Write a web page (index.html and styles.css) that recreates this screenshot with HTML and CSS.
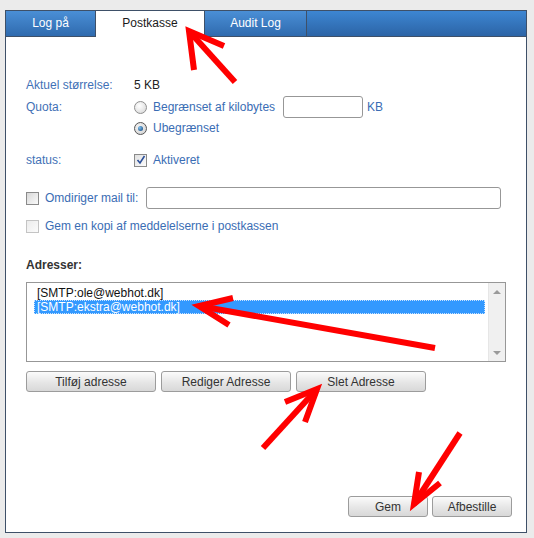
FILE: index.html
```html
<!DOCTYPE html>
<html>
<head>
<meta charset="utf-8">
<link rel="stylesheet" href="styles.css">
</head>
<body>
<div class="panel">
  <div class="tabs">
    <div class="tab tab-first">Log på</div>
    <div class="tab tab-active">Postkasse</div>
    <div class="tab tab-last">Audit Log</div>
    <div class="tab-fill"></div>
  </div>
  <div class="content">
    <div class="row r1">
      <span class="label">Aktuel størrelse:</span>
      <span class="value">5 KB</span>
    </div>
    <div class="row r2">
      <span class="label">Quota:</span>
      <span class="opt"><span class="radio"></span><span class="blue">Begrænset af kilobytes</span></span>
      <span class="textbox kb"></span>
      <span class="blue unit">KB</span>
    </div>
    <div class="row r3">
      <span class="label"></span>
      <span class="opt"><span class="radio on"><span class="dot"></span></span><span class="blue">Ubegrænset</span></span>
    </div>
    <div class="row r4">
      <span class="label">status:</span>
      <span class="opt"><span class="check on"><svg width="10" height="10" viewBox="0 0 10 10"><path d="M1.5 5 L4 8 L8.5 1" fill="none" stroke="#2b4f9a" stroke-width="1.6"/></svg></span><span class="blue">Aktiveret</span></span>
    </div>
    <div class="row r5">
      <span class="opt"><span class="check"></span><span class="blue">Omdiriger mail til:</span></span>
      <span class="textbox mail"></span>
    </div>
    <div class="row r6">
      <span class="opt"><span class="check off"></span><span class="blue">Gem en kopi af meddelelserne i postkassen</span></span>
    </div>
    <div class="heading">Adresser:</div>
    <div class="listbox">
      <div class="items">
        <div class="item">[SMTP:ole@webhot.dk]</div>
        <div class="item sel">[SMTP:ekstra@webhot.dk]</div>
      </div>
      <div class="scroll">
        <span class="arr up"></span>
        <span class="arr down"></span>
      </div>
    </div>
    <div class="btnrow">
      <button class="btn">Tilføj adresse</button>
      <button class="btn">Rediger Adresse</button>
      <button class="btn">Slet Adresse</button>
    </div>
    <div class="footer">
      <button class="btn small">Gem</button>
      <button class="btn small">Afbestille</button>
    </div>
  </div>
</div>
<svg class="arrows" width="534" height="538" viewBox="0 0 534 538">
  <g fill="none" stroke="#ff0000" stroke-width="6" stroke-linecap="butt" stroke-linejoin="miter">
    <path d="M235 82 L189 31"/>
    <path d="M224 46 L189 31 L194 70"/>
    <path d="M435 348 L199 306"/>
    <path d="M233 298 L199 306 L229 325"/>
    <path d="M263 448 L317 389"/>
    <path d="M285 402 L317 389 L305 422"/>
    <path d="M460 433 L414 504"/>
    <path d="M419 472 L414 504 L440 483"/>
  </g>
</svg>
</body>
</html>
```
FILE: styles.css
```css
html, body {
  margin: 0;
  padding: 0;
}
body {
  background: #ebebeb;
  width: 534px;
  height: 538px;
  position: relative;
  font-family: "Liberation Sans", Arial, sans-serif;
  font-size: 12px;
  overflow: hidden;
}
.panel {
  position: absolute;
  left: 5px;
  top: 10px;
  width: 520px;
  height: 521px;
  border: 1px solid #3e5068;
  background: #fff;
}
.tabs {
  display: flex;
  height: 26px;
}
.tab {
  height: 25px;
  line-height: 25px;
  text-align: center;
  color: #fff;
  background: linear-gradient(#4a8fd6, #2f6aae);
  border-bottom: 1px solid #3e5068;
  border-right: 1px solid #3e5068;
  font-size: 12px;
}
.tab-first { width: 89px; }
.tab-active {
  width: 108px;
  background: #fff;
  color: #1a1a1a;
  border-bottom: 1px solid #fff;
}
.tab-last { width: 101px; }
.tab-fill {
  flex: 1;
  height: 25px;
  background: linear-gradient(#3d86d2, #2c64a6);
  border-bottom: 1px solid #3e5068;
}
.content {
  padding: 38px 0 0 20px;
}
.row {
  display: flex;
  align-items: center;
  height: 20px;
  color: #3a6db4;
}
.label {
  width: 108px;
  color: #3f71b6;
}
.value { color: #222; }
.blue { color: #3a6db4; }
.opt {
  display: flex;
  align-items: center;
}
.radio {
  width: 11px;
  height: 11px;
  border: 1px solid #8f8f8f;
  border-radius: 50%;
  background: radial-gradient(circle at 40% 35%, #fff, #d4d4d4);
  margin-right: 6px;
  display: flex;
  align-items: center;
  justify-content: center;
}
.radio.on {
  border-color: #555;
  background: radial-gradient(circle at 40% 35%, #f4f4f4, #cfcfcf);
}
.dot {
  width: 5px;
  height: 5px;
  border-radius: 50%;
  background: radial-gradient(circle at 35% 35%, #7ec1f0, #0b3d74);
}
.check {
  width: 11px;
  height: 11px;
  border: 1px solid #8a8a8a;
  background: linear-gradient(135deg, #d8d8d8, #fafafa);
  margin-right: 6px;
  display: flex;
  align-items: center;
  justify-content: center;
}
.check.on { background: linear-gradient(135deg, #e0e0e0, #fcfcfc); }
.check.off {
  border-color: #c4c4c4;
  background: linear-gradient(135deg, #ececec, #fbfbfb);
}
.r1 { margin-top: 0; }
.r2 { height: 22px; margin-top: 1px; }
.r3 { margin-top: 0; }
.r4 { margin-top: 12px; }
.r5 { height: 22px; margin-top: 17px; }
.r6 { margin-top: 7px; }
.textbox {
  display: block;
  height: 20px;
  border: 1px solid #979797;
  border-radius: 3px;
  background: #fff;
  box-sizing: border-box;
}
.kb {
  width: 80px;
  height: 22px;
  margin-left: 8px;
}
.unit { margin-left: 4px; }
.mail {
  width: 355px;
  height: 22px;
  margin-left: 8px;
}
.heading {
  margin-top: 19px;
  height: 20px;
  line-height: 20px;
  font-weight: bold;
  color: #333;
}
.listbox {
  margin-top: 7px;
  width: 480px;
  height: 80px;
  box-sizing: border-box;
  border: 1px solid #979797;
  display: flex;
}
.items {
  flex: 1;
  padding: 3px 3px 0 7px;
}
.item {
  height: 14px;
  line-height: 14px;
  padding-left: 3px;
  color: #111;
}
.item.sel {
  background: #3399ff;
  color: #fff;
  outline: 1px dotted #c8e2ff;
  outline-offset: -1px;
}
.scroll {
  width: 16px;
  background: #f0f0f0;
  border-left: 1px solid #e6e6e6;
  display: flex;
  flex-direction: column;
  justify-content: space-between;
  align-items: center;
  padding: 7px 0 6px;
}
.arr {
  width: 0;
  height: 0;
  border-left: 4px solid transparent;
  border-right: 4px solid transparent;
}
.arr.up { border-bottom: 4px solid #9a9a9a; }
.arr.down { border-top: 4px solid #9a9a9a; }
.btnrow {
  display: flex;
  gap: 5px;
  margin-top: 9px;
}
.btn {
  width: 130px;
  height: 21px;
  padding: 0;
  border: 1px solid #9c9c9c;
  border-radius: 3px;
  background: linear-gradient(#fbfbfb, #e6e6e6 55%, #d8d8d8);
  font-family: "Liberation Sans", Arial, sans-serif;
  font-size: 12px;
  color: #333;
}
.footer {
  display: flex;
  gap: 4px;
  margin-top: 104px;
  margin-left: 322px;
}
.btn.small { width: 80px; }
.arrows {
  position: absolute;
  left: 0;
  top: 0;
  pointer-events: none;
}
```
